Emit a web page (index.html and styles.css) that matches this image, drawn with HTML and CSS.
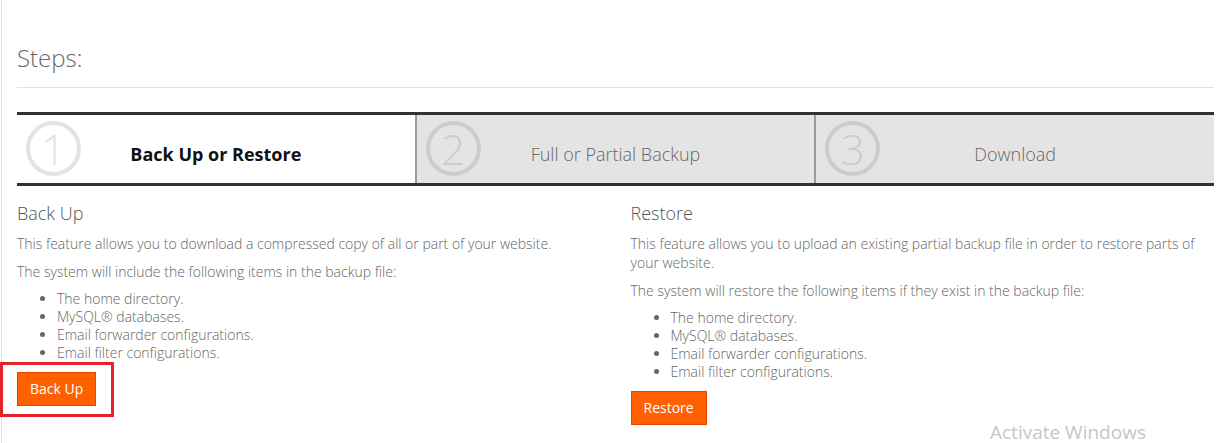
FILE: index.html
```html
<!DOCTYPE html>
<html lang="en">
<head>
<meta charset="utf-8">
<title>Backup Wizard</title>
<link rel="stylesheet" href="styles.css">
</head>
<body>
<div class="page">
  <h2 class="steps-title">Steps:</h2>
  <hr class="rule">
  <div class="steps">
    <div class="step step-active">
      <span class="step-num">1</span>
      <span class="step-label">Back Up or Restore</span>
    </div>
    <div class="step">
      <span class="step-num">2</span>
      <span class="step-label">Full or Partial Backup</span>
    </div>
    <div class="step">
      <span class="step-num">3</span>
      <span class="step-label">Download</span>
    </div>
  </div>
  <div class="cols">
    <section class="col">
      <h3 class="col-title">Back Up</h3>
      <p>This feature allows you to download a compressed copy of all or part of your website.</p>
      <p>The system will include the following items in the backup file:</p>
      <ul>
        <li>The home directory.</li>
        <li>MySQL® databases.</li>
        <li>Email forwarder configurations.</li>
        <li>Email filter configurations.</li>
      </ul>
      <div class="btn-wrap">
        <button class="btn" type="button">Back Up</button>
        <span class="highlight"></span>
      </div>
    </section>
    <section class="col">
      <h3 class="col-title">Restore</h3>
      <p>This feature allows you to upload an existing partial backup file in order to restore parts of your website.</p>
      <p>The system will restore the following items if they exist in the backup file:</p>
      <ul>
        <li>The home directory.</li>
        <li>MySQL® databases.</li>
        <li>Email forwarder configurations.</li>
        <li>Email filter configurations.</li>
      </ul>
      <button class="btn" type="button">Restore</button>
    </section>
  </div>
  <div class="watermark">Activate Windows</div>
</div>
</body>
</html>
```
FILE: styles.css
```css
html, body {
  margin: 0;
  padding: 0;
  background: #fff;
  height: 100%;
  overflow: hidden;
}
body {
  font-family: "Open Sans", "Liberation Sans", sans-serif;
  color: #666;
}
.page {
  position: relative;
  margin-left: 1px;
  border-left: 1px solid #e2e2e2;
  padding: 0 15px 0 15px;
  min-height: 100%;
  box-sizing: border-box;
}
.steps-title {
  margin: 0;
  padding-top: 45px;
  font-size: 24px;
  font-weight: 300;
  line-height: 1.1;
  color: #666;
}
.rule {
  margin: 16px 0 0;
  border: 0;
  border-top: 1px solid #dce4e4;
  height: 0;
}
.steps {
  display: flex;
  margin-top: 24px;
  border-top: 3px solid #333;
  border-bottom: 3px solid #333;
  height: 68px;
  box-sizing: content-box;
}
.step {
  position: relative;
  flex: 1 1 0;
  display: flex;
  align-items: center;
  justify-content: center;
  padding-top: 10px;
  box-sizing: border-box;
  background: #e4e4e4;
  border-left: 2px solid #9a9a9a;
}
.step-active {
  background: #fff;
  border-left: 0;
}
.step-num {
  position: absolute;
  left: 9px;
  top: 6px;
  width: 47px;
  height: 47px;
  border: 4px solid #cccccc;
  border-radius: 50%;
  display: flex;
  align-items: center;
  justify-content: center;
  font-size: 42px;
  font-weight: 300;
  line-height: 1;
  color: #cccccc;
}
.step-active .step-num {
  border-color: #e3e3e3;
  color: #e3e3e3;
}
.step-label {
  font-size: 18px;
  font-weight: 300;
  color: #666;
}
.step-active .step-label {
  font-weight: 700;
  color: #111;
}
.cols {
  display: grid;
  grid-template-columns: 1fr 1fr;
  column-gap: 30px;
  margin-top: 18px;
}
.col-title {
  margin: 0 0 10px;
  font-size: 18px;
  font-weight: 300;
  line-height: 1.1;
  color: #555;
}
.col p {
  margin: 0 0 9px;
  font-size: 14px;
  font-weight: 300;
  line-height: 19px;
  color: #666;
}
.col ul {
  margin: 0 0 10px;
  padding-left: 40px;
  font-size: 14px;
  font-weight: 300;
  line-height: 18px;
  color: #666;
}
.btn-wrap {
  position: relative;
  display: inline-block;
}
.btn {
  display: inline-block;
  font-family: "Open Sans", "Liberation Sans", sans-serif;
  font-size: 14px;
  line-height: 20px;
  padding: 6px 12px;
  background: #ff6000;
  color: #fff;
  border: 1px solid #e64400;
  border-radius: 0;
  cursor: pointer;
}
.highlight {
  position: absolute;
  left: -17px;
  top: -10px;
  width: 108px;
  height: 49px;
  border: 3px solid #e3222c;
  pointer-events: none;
}
.watermark {
  position: absolute;
  left: 988px;
  top: 421px;
  font-size: 19px;
  line-height: 22px;
  color: #c6c6c6;
  white-space: nowrap;
}
```
